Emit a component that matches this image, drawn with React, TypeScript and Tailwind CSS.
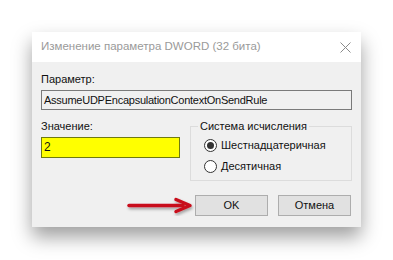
import React from 'react';

function Radio({ checked, label }: { checked: boolean; label: string }) {
  return (
    <div className="flex items-center h-[21px]">
      <span className="w-[13px] h-[13px] rounded-full border border-[#333333] bg-white flex items-center justify-center">
        {checked && <span className="w-[7px] h-[7px] rounded-full bg-[#333333]" />}
      </span>
      <span className="ml-[4px]">{label}</span>
    </div>
  );
}

function RedArrow() {
  return (
    <svg
      className="absolute left-[126px] top-[196px]"
      width="70"
      height="20"
      viewBox="0 0 70 20"
    >
      <defs>
        <filter id="sh" x="-20%" y="-50%" width="140%" height="200%">
          <feDropShadow dx="1" dy="2" stdDeviation="1.5" floodColor="#000" floodOpacity="0.35" />
        </filter>
      </defs>
      <g filter="url(#sh)">
        <path d="M3 9.5 L57 9.5" stroke="#c8101a" strokeWidth="3.5" strokeLinecap="round" />
        <path d="M50 3.5 L64 9.5 L50 15.5" fill="none" stroke="#c8101a" strokeWidth="3.5" strokeLinejoin="round" strokeLinecap="round" />
      </g>
    </svg>
  );
}

export default function App() {
  return (
    <div
      className="relative w-[393px] h-[260px] bg-white overflow-hidden pt-[32px] pl-[32px] text-[11px] text-[#111111]"
      style={{ fontFamily: '"Liberation Sans", Arial, sans-serif' }}
    >
      <div className="w-[329px] h-[195px] bg-[#f0f0f0] shadow-[0_10px_18px_rgba(0,0,0,0.38)] flex flex-col">
        <div className="h-[30px] bg-white flex items-center justify-between pl-[9px] pr-[10px]">
          <span className="text-[11.5px] text-[#9a9a9a]">Изменение параметра DWORD (32 бита)</span>
          <svg width="11" height="11" viewBox="0 0 11 11">
            <path d="M0.5 0.5 L10.5 10.5 M10.5 0.5 L0.5 10.5" stroke="#8a8a8a" strokeWidth="1" />
          </svg>
        </div>
        <div className="flex-1 px-[9px] pt-[9px]">
          <div className="h-[16px] leading-[16px]">Параметр:</div>
          <div className="mt-[3px] h-[20px] w-[311px] border border-[#7a7a7a] bg-[#f0f0f0] px-[2px] leading-[18px] tracking-[-0.25px]">
            AssumeUDPEncapsulationContextOnSendRule
          </div>
          <div className="flex mt-[8px]">
            <div className="w-[139px]">
              <div className="h-[16px] leading-[16px]">Значение:</div>
              <div className="mt-[3px] h-[21px] border border-[#6f7a10] bg-[#ffff00] px-[2px] leading-[19px] text-[12px]">
                2
              </div>
            </div>
            <fieldset className="ml-[10px] w-[162px] h-[63px] border border-[#dcdcdc] m-0 p-0">
              <legend className="ml-[7px] px-[2px] h-[16px] leading-[16px]">Система исчисления</legend>
              <div className="pl-[13px] pt-[1px]">
                <Radio checked label="Шестнадцатеричная" />
                <Radio checked={false} label="Десятичная" />
              </div>
            </fieldset>
          </div>
          <div className="flex justify-end gap-[10px] mt-[14px] pr-[1px]">
            <button className="w-[73px] h-[21px] bg-[#e1e1e1] border border-[#adadad] text-[11px] text-[#111111]">OK</button>
            <button className="w-[73px] h-[21px] bg-[#e1e1e1] border border-[#adadad] text-[11px] text-[#111111]">Отмена</button>
          </div>
        </div>
      </div>
      <RedArrow />
    </div>
  );
}
